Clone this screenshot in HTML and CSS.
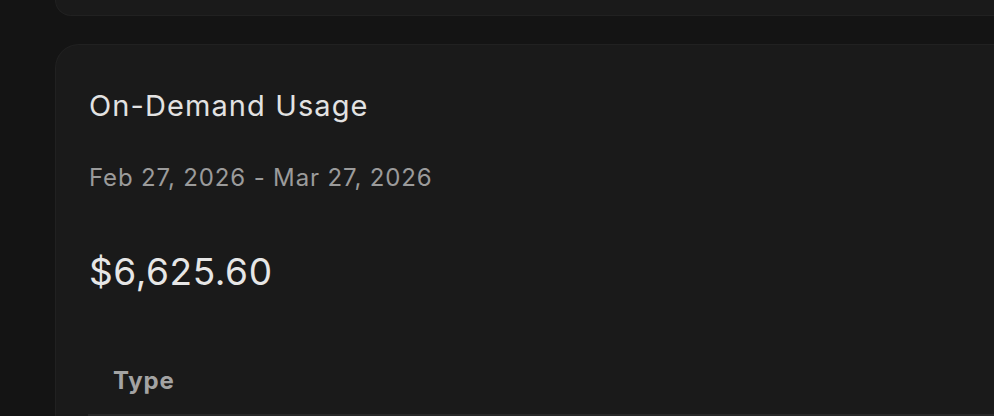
FILE: index.html
```html
<!DOCTYPE html>
<html lang="en">
<head>
  <meta charset="UTF-8">
  <meta name="viewport" content="width=device-width, initial-scale=1.0">
  <title>Usage</title>
  <link rel="stylesheet" href="styles.css">
</head>
<body>
  <div class="page">
    <!-- previous card, scrolled mostly out of view -->
    <div class="card card-prev"></div>

    <div class="card usage-card">
      <h2 class="usage-title">On-Demand Usage</h2>
      <div class="usage-period">Feb 27, 2026 - Mar 27, 2026</div>
      <div class="usage-total">$6,625.60</div>

      <table class="usage-table">
        <thead>
          <tr>
            <th>Type</th>
          </tr>
        </thead>
      </table>
    </div>
  </div>
</body>
</html>
```

FILE: styles.css
```css
body {
  margin: 0;
  padding: 0;
  background: #141414;
  font-family: Inter, "Noto Sans", sans-serif;
  overflow: hidden;
  height: 416px;
}

.page {
  padding-left: 55px;
  width: 1200px;
  display: flex;
  flex-direction: column;
  gap: 28px;
}

.card {
  background: #1a1a1a;
  border: 1px solid #212121;
  border-radius: 24px;
}

.card-prev {
  height: 15px;
  border-top: none;
  border-top-left-radius: 0;
  border-top-right-radius: 0;
}

.usage-card {
  padding: 32px 32px 0 33px;
  border-bottom: none;
  border-bottom-left-radius: 0;
  border-bottom-right-radius: 0;
}

.usage-title {
  margin: 11px 0 0;
  font-size: 29px;
  font-weight: 400;
  letter-spacing: 1.1px;
  color: #e2e2e2;
}

.usage-period {
  margin-top: 40px;
  font-size: 24px;
  letter-spacing: 0.85px;
  color: #9b9b9b;
}

.usage-total {
  margin-top: 57px;
  font-size: 37px;
  letter-spacing: 0.6px;
  color: #e6e6e6;
}

.usage-table {
  margin-top: 56px;
  margin-left: -1px;
  width: 100%;
  border-collapse: collapse;
}

.usage-table th {
  text-align: left;
  padding: 16px 25px 19px;
  font-size: 24px;
  font-weight: 700;
  letter-spacing: 0.8px;
  color: #a3a3a3;
  border-bottom: 2px solid #272727;
}
```
